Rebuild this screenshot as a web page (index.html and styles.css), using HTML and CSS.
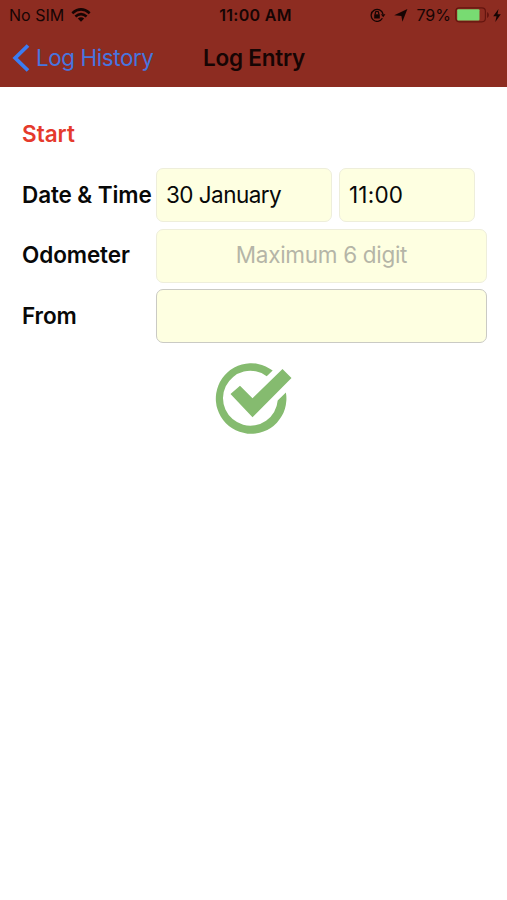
FILE: index.html
```html
<!DOCTYPE html>
<html lang="en">
<head>
<meta charset="utf-8">
<title>Log Entry</title>
<link rel="stylesheet" href="styles.css">
</head>
<body>
<header class="header">
  <div class="status">
    <div class="status-left">
      <span class="carrier">No SIM</span>
      <svg class="wifi" width="20" height="14" viewBox="0 0 20 14" fill="none" stroke="#160504" stroke-width="2.6">
        <path d="M1.3 5.2Q10-2.4 18.7 5.2M4.4 8.6Q10 3.8 15.6 8.6"/>
        <path d="M6.8 10.6Q10 7.9 13.2 10.6L10 13.8Z" fill="#160504" stroke="none"/>
      </svg>
    </div>
    <span class="clock">11:00 AM</span>
    <div class="status-right">
      <svg class="lock" width="16" height="14" viewBox="0 0 16 14" fill="none" stroke="#160504" stroke-width="1.3">
        <path d="M12.4 10.3A6 6 0 1 1 13 6"/>
        <path d="M10.9 6.2h4.5l-2.2 3z" fill="#160504" stroke="none"/>
        <path d="M4.2 6.3h5.6v4.2H4.2z" fill="#160504" stroke="none"/>
        <path d="M5.3 6.5V5a1.7 1.7 0 0 1 3.4 0v1.5"/>
      </svg>
      <svg class="arrow" width="14" height="13" viewBox="0 0 14 13"><path d="M13.4 0 8.4 12.8 7.4 7 .2 6.2z" fill="#160504"/></svg>
      <span class="percent">79%</span>
      <svg class="battery" width="34" height="16" viewBox="0 0 34 16">
        <rect x=".8" y=".8" width="29.6" height="14" rx="3.5" fill="none" stroke="#64150f" stroke-width="1.2"/>
        <path d="M32 5v6q2-1 2-3t-2-3z" fill="#64150f"/>
        <rect x="2.2" y="2.2" width="22.3" height="11.2" rx="1" fill="#78db72"/>
      </svg>
      <svg class="bolt" width="8" height="13" viewBox="0 0 8 13"><path d="M5.5 0 .2 7.2h3.3L2.3 13 7.8 5.3H4.5z" fill="#160504"/></svg>
    </div>
  </div>
  <nav class="nav">
    <a class="back">
      <svg width="18" height="28" viewBox="0 0 18 28" fill="none" stroke="#3b7cf3" stroke-width="3.8"><path d="M16 1.5 3.2 14 16 26.5"/></svg>
      <span class="back-label">Log History</span>
    </a>
    <h1 class="title">Log Entry</h1>
  </nav>
</header>
<main class="form">
  <h2 class="section">Start</h2>
  <div class="row">
    <span class="label label-date">Date &amp; Time</span>
    <div class="field date"><span class="date-text">30 January</span></div>
    <div class="field time"><span class="time-text">11:00</span></div>
  </div>
  <div class="row">
    <span class="label">Odometer</span>
    <div class="field wide placeholder"><span class="hint">Maximum 6 digit</span></div>
  </div>
  <div class="row">
    <span class="label">From</span>
    <div class="field wide outlined"></div>
  </div>
  <svg class="confirm" width="78" height="72" viewBox="0 0 78 72">
    <path d="M57.7 8.6A35.3 35.3 0 1 0 70.9 30.5L62.7 38.5A27.4 27.4 0 1 1 51.7 14.2z" fill="#85bb6f"/>
    <path d="M15.5 32 25 23.7 37.5 36.2 67.5 7 76.5 16 37.5 55.3z" fill="#85bb6f"/>
  </svg>
</main>
</body>
</html>
```
FILE: styles.css
```css
* { box-sizing: border-box; }
body { margin: 0; background: #fff; color: #080808; font-family: Inter, "Liberation Sans", sans-serif; }
span, h1, h2 { white-space: nowrap; }
.header { height: 87px; background: #8d2c21; color: #160504; }
.status { height: 30px; display: grid; grid-template-columns: 1fr auto 1fr; align-items: center; padding: 0 6px 0 9px; font-size: 16px; }
.status-left, .status-right { display: flex; align-items: center; }
.status-left { padding-bottom: 1px; }
.status-right { justify-content: flex-end; }
.wifi { margin-left: 7px; }
.clock { font-weight: 600; padding-left: 1px; letter-spacing: 0.3px; }
.lock { margin-right: 8px; }
.arrow { margin-right: 8px; }
.battery { margin: 0 0 1px 4px; }
.bolt { margin-left: 4px; }
.nav { height: 57px; display: grid; grid-template-columns: 1fr auto 1fr; align-items: center; padding: 0 11px 1px 12px; }
.back { display: flex; align-items: center; gap: 6px; color: #4775df; font-size: 22.5px; }
.back-label { letter-spacing: -0.45px; padding-bottom: 2px; }
.title { margin: 0; padding-bottom: 2px; font-size: 22.5px; font-weight: 600; letter-spacing: -0.2px; }
.form { padding: 33px 20px 0 22px; font-size: 22.5px; display: flex; flex-direction: column; }
.section { margin: 0 0 21px; font-size: 22.5px; line-height: 27px; font-weight: 600; color: #e53a2c; }
.row { display: flex; align-items: center; margin-bottom: 6.5px; }
.label { width: 134px; flex: none; padding-bottom: 2px; font-weight: 600; letter-spacing: -0.1px; }
.field { height: 54px; flex: none; display: flex; align-items: center; padding: 0 0 2px 9px; border: 1px solid #eeeedb; border-radius: 7px; background: #feffe1; }
.date { width: 176px; margin-right: 7px; }
.date-text { letter-spacing: -0.55px; }
.time-text { letter-spacing: 0.2px; }
.time { width: 136px; }
.wide { width: 331px; }
.placeholder { justify-content: center; padding: 0 0 2px; color: #b5b5a7; }
.hint { letter-spacing: -0.3px; }
.outlined { border-color: #cacac4; }
.confirm { align-self: flex-start; margin: 12.5px 0 0 193px; }
```
